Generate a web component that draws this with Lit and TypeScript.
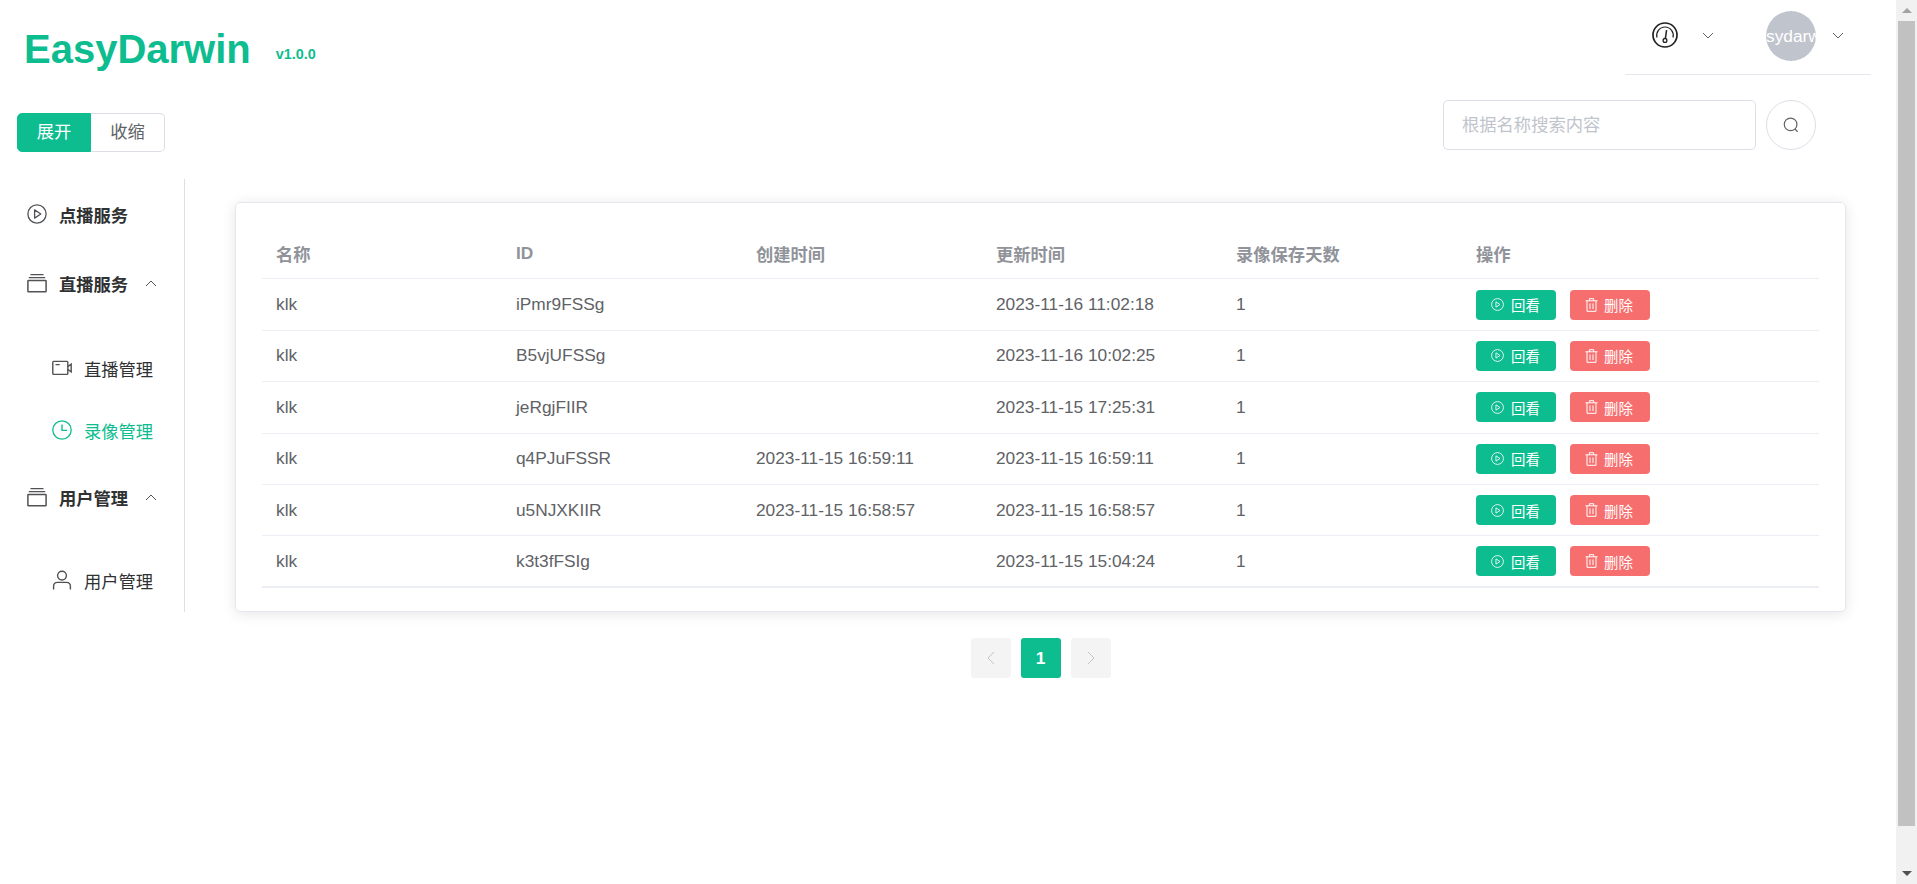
import { html, css, LitElement, svg } from "lit";
import { customElement } from "lit/decorators.js";

const playIcon = (size = 20) => html`<svg width=${size} height=${size} viewBox="0 0 20 20" fill="none" stroke="currentColor" stroke-width="1.3">
  <circle cx="10" cy="10" r="9.1"></circle>
  <path d="M7.6 5.9v8.2l6.2-4.1z" stroke-linejoin="round"></path>
</svg>`;

const stackIcon = html`<svg width="20" height="20" viewBox="0 0 20 20" fill="none" stroke="currentColor" stroke-width="1.3">
  <path d="M3.5 1.6h13M1.8 4.6h16.4" stroke-width="1.2"></path>
  <rect x="0.9" y="7.4" width="18.2" height="11.4" rx="0.6" stroke-width="1.5"></rect>
</svg>`;

const cameraIcon = html`<svg width="20" height="16" viewBox="0 0 20 16" fill="none" stroke="currentColor" stroke-width="1.4">
  <rect x="0.8" y="1.4" width="15" height="13" rx="0.8"></rect>
  <path d="M3.5 4.6h4.2M15.8 6.6l3.4-2.4v7.6l-3.4-2.4"></path>
</svg>`;

const clockIcon = html`<svg width="20" height="20" viewBox="0 0 20 20" fill="none" stroke="currentColor" stroke-width="1.3">
  <circle cx="10" cy="10" r="9.2"></circle>
  <path d="M10 4.4v6h5" stroke-width="1.4"></path>
</svg>`;

const userIcon = html`<svg width="20" height="20" viewBox="0 0 20 20" fill="none" stroke="currentColor" stroke-width="1.4">
  <circle cx="10" cy="5.6" r="4.4"></circle>
  <path d="M1.6 19.4v-3.2c0-2.4 1.8-3.8 4-3.8h8.8c2.2 0 4 1.4 4 3.8v3.2"></path>
</svg>`;

const chevron = (dir: "up" | "down") => html`<svg width="14" height="8" viewBox="0 0 14 8" fill="none" stroke="currentColor" stroke-width="1">
  ${dir === "up" ? svg`<path d="M2 7l5-5 5 5"></path>` : svg`<path d="M2 1l5 5 5-5"></path>`}
</svg>`;

const gaugeIcon = html`<svg width="26" height="26" viewBox="0 0 26 26" fill="none" stroke="#222" stroke-width="1.7">
  <circle cx="13" cy="13" r="12"></circle>
  <path d="M5 15.5a8.3 8.3 0 1 1 16 0" stroke-width="1.2"></path>
  <path d="M14.6 8.2l-1.2 8" stroke-width="1.5"></path>
  <circle cx="13" cy="18.4" r="1.9" stroke-width="1.3"></circle>
</svg>`;

const searchIcon = html`<svg width="16" height="16" viewBox="0 0 16 16" fill="none" stroke="#606266" stroke-width="1.2">
  <circle cx="7.6" cy="7.4" r="6.3"></circle>
  <path d="M12 12l2.6 2.8"></path>
</svg>`;

const trashIcon = html`<svg width="13" height="14" viewBox="0 0 13 14" fill="none" stroke="currentColor" stroke-width="1">
  <path d="M0.5 2.8h12M4.4 2.6V0.7h4.2v1.9M2 3v10.3h9V3M5 5.4v5.6M8 5.4v5.6"></path>
</svg>`;

const rows = [
  ["klk", "iPmr9FSSg", "", "2023-11-16 11:02:18", "1"],
  ["klk", "B5vjUFSSg", "", "2023-11-16 10:02:25", "1"],
  ["klk", "jeRgjFIIR", "", "2023-11-15 17:25:31", "1"],
  ["klk", "q4PJuFSSR", "2023-11-15 16:59:11", "2023-11-15 16:59:11", "1"],
  ["klk", "u5NJXKIIR", "2023-11-15 16:58:57", "2023-11-15 16:58:57", "1"],
  ["klk", "k3t3fFSIg", "", "2023-11-15 15:04:24", "1"],
];

@customElement("app-root")
export class AppRoot extends LitElement {
  static styles = css`
    :host {
      display: flex;
      height: 884px;
      overflow: hidden;
      background: #fff;
      font-family: "Liberation Sans", "Noto Sans CJK SC", sans-serif;
      font-size: 17.3px;
      color: #606266;
    }

    .page {
      flex: 1;
      min-width: 0;
    }

    /* header */
    .header {
      display: flex;
      justify-content: space-between;
      height: 75px;
    }
    .brand {
      display: flex;
      padding: 29px 0 0 24px;
      color: #0dbc8f;
      font-weight: 700;
    }
    .logo {
      font-size: 40px;
      line-height: 40px;
    }
    .version {
      margin: 18px 0 0 25px;
      font-size: 14.4px;
      line-height: 14.4px;
    }
    .user-bar {
      display: flex;
      align-items: center;
      box-sizing: border-box;
      width: 246px;
      height: 75px;
      margin-right: 25px;
      padding: 0 0 3px 27px;
      border-bottom: 1px solid #e4e7ed;
      color: #606266;
    }
    .user-bar .down-1 {
      margin-left: 23px;
      display: flex;
    }
    .user-bar .down-2 {
      margin-left: 15px;
      display: flex;
    }
    .gauge {
      display: flex;
      margin-top: -2px;
    }
    .avatar {
      flex: none;
      width: 50px;
      height: 50px;
      margin-left: 51px;
      border-radius: 50%;
      background: #c0c4cc;
      color: #fff;
      line-height: 50px;
      text-align: center;
      white-space: nowrap;
      overflow: hidden;
    }

    /* toolbar */
    .toolbar {
      display: flex;
      justify-content: space-between;
      align-items: flex-start;
      padding: 25px 80px 0 17px;
    }
    .toggle {
      display: flex;
      margin-top: 13px;
    }
    .toggle span {
      box-sizing: border-box;
      width: 74px;
      height: 39px;
      line-height: 37px;
      text-align: center;
      border: 1px solid #dcdfe6;
    }
    .toggle .on {
      background: #0dbc8f;
      border-color: #0dbc8f;
      color: #fff;
      border-radius: 5px 0 0 5px;
    }
    .toggle .off {
      border-left: 0;
      border-radius: 0 5px 5px 0;
    }
    .search {
      display: flex;
      gap: 10px;
    }
    .search input {
      box-sizing: border-box;
      width: 313px;
      height: 50px;
      padding: 0 18px;
      border: 1px solid #dcdfe6;
      border-radius: 5px;
      outline: none;
      font: inherit;
      color: #606266;
    }
    .search input::placeholder {
      color: #c0c4cc;
    }
    .search-btn {
      display: flex;
      align-items: center;
      justify-content: center;
      box-sizing: border-box;
      width: 50px;
      height: 50px;
      border: 1px solid #dcdfe6;
      border-radius: 50%;
    }

    /* body */
    .content {
      display: flex;
      margin-top: 27px;
    }
    .sidebar {
      flex: none;
      box-sizing: border-box;
      width: 185px;
      height: 433px;
      padding-top: 10px;
      border-right: 1px solid #dcdfe6;
      color: #303133;
    }
    .menu-title {
      display: flex;
      align-items: center;
      height: 50px;
      padding-left: 27px;
      font-weight: 700;
    }
    .menu-title svg:first-child {
      color: #505255;
      margin-right: 12px;
      flex: none;
    }
    .menu-title .arrow {
      display: flex;
      margin-left: 16px;
      color: #808285;
    }
    .menu-title.vod {
      margin-bottom: 19px;
    }
    .submenu {
      margin: 29px 0 11px;
    }
    .submenu.last {
      margin: 27px 0 0;
    }
    .menu-item {
      display: flex;
      align-items: center;
      height: 62px;
      padding-left: 52px;
    }
    .menu-item .icon {
      display: flex;
      justify-content: center;
      width: 20px;
      margin-right: 12px;
      color: #505255;
    }
    .menu-item.active,
    .menu-item.active .icon {
      color: #0dbc8f;
    }

    .main {
      flex: 1;
      min-width: 0;
      padding: 23px 50px 0;
    }
    .card {
      box-sizing: border-box;
      height: 410px;
      padding: 25px 26px 0;
      border: 1px solid #e4e7ed;
      border-radius: 5px;
      box-shadow: 0 2px 14px rgba(0, 0, 0, 0.1);
    }
    table {
      width: 100%;
      table-layout: fixed;
      border-collapse: separate;
      border-spacing: 0;
    }
    th,
    td {
      box-sizing: border-box;
      height: 51.4px;
      padding: 0 14px;
      border-bottom: 1px solid #ebeef5;
      text-align: left;
      font-weight: 400;
      white-space: nowrap;
    }
    th {
      font-weight: 700;
      color: #909399;
    }
    th.c {
      width: 240px;
    }
    tbody tr:last-child td {
      border-bottom-width: 2px;
    }
    .actions {
      display: flex;
      gap: 14px;
    }
    .btn {
      display: flex;
      align-items: center;
      gap: 7px;
      box-sizing: border-box;
      height: 30px;
      padding-left: 15px;
      border-radius: 4px;
      color: #fff;
      font-size: 14.4px;
    }
    .btn.play {
      width: 80px;
      background: #0dbc8f;
    }
    .btn.del {
      width: 80px;
      background: #f76e6e;
      gap: 6px;
    }

    .pager {
      display: flex;
      justify-content: center;
      gap: 10px;
      margin-top: 26px;
    }
    .pager span {
      display: flex;
      align-items: center;
      justify-content: center;
      width: 40px;
      height: 40px;
      border-radius: 3px;
      background: #f4f4f5;
      color: #c0c4cc;
    }
    .pager .current {
      background: #0dbc8f;
      color: #fff;
      font-weight: 700;
    }

    /* window scrollbar */
    .scrollbar {
      flex: none;
      display: flex;
      flex-direction: column;
      box-sizing: border-box;
      width: 21px;
      background: #f1f1f1;
    }
    .scrollbar .step {
      display: flex;
      align-items: center;
      justify-content: center;
      height: 21px;
    }
    .scrollbar .thumb {
      height: 805px;
      margin: 0 2px;
      background: #c1c1c1;
    }
    .scrollbar .spacer {
      flex: 1;
    }
  `;

  render() {
    return html`
      <div class="page">
        <div class="header">
          <div class="brand">
            <div class="logo">EasyDarwin</div>
            <div class="version">v1.0.0</div>
          </div>
          <div class="user-bar">
            <span class="gauge">${gaugeIcon}</span>
            <span class="down-1">${chevron("down")}</span>
            <div class="avatar">sydarwin</div>
            <span class="down-2">${chevron("down")}</span>
          </div>
        </div>

        <div class="toolbar">
          <div class="toggle">
            <span class="on">展开</span>
            <span class="off">收缩</span>
          </div>
          <div class="search">
            <input placeholder="根据名称搜索内容" />
            <div class="search-btn">${searchIcon}</div>
          </div>
        </div>

        <div class="content">
          <nav class="sidebar">
            <div class="menu-title vod">${playIcon()}点播服务</div>
            <div class="menu-title">
              ${stackIcon}直播服务
              <span class="arrow">${chevron("up")}</span>
            </div>
            <div class="submenu">
              <div class="menu-item"><span class="icon">${cameraIcon}</span>直播管理</div>
              <div class="menu-item active"><span class="icon">${clockIcon}</span>录像管理</div>
            </div>
            <div class="menu-title">
              ${stackIcon}用户管理
              <span class="arrow">${chevron("up")}</span>
            </div>
            <div class="submenu last">
              <div class="menu-item"><span class="icon">${userIcon}</span>用户管理</div>
            </div>
          </nav>

          <div class="main">
            <div class="card">
              <table>
                <thead>
                  <tr>
                    <th class="c">名称</th>
                    <th class="c">ID</th>
                    <th class="c">创建时间</th>
                    <th class="c">更新时间</th>
                    <th class="c">录像保存天数</th>
                    <th>操作</th>
                  </tr>
                </thead>
                <tbody>
                  ${rows.map(
                    (r) => html`<tr>
                      ${r.map((v) => html`<td>${v}</td>`)}
                      <td>
                        <div class="actions">
                          <div class="btn play">${playIcon(13)}回看</div>
                          <div class="btn del">${trashIcon}删除</div>
                        </div>
                      </td>
                    </tr>`
                  )}
                </tbody>
              </table>
            </div>
            <div class="pager">
              <span><svg width="10" height="14" viewBox="0 0 10 14" fill="none" stroke="currentColor"><path d="M8 1L2 7l6 6"></path></svg></span>
              <span class="current">1</span>
              <span><svg width="10" height="14" viewBox="0 0 10 14" fill="none" stroke="currentColor"><path d="M2 1l6 6-6 6"></path></svg></span>
            </div>
          </div>
        </div>
      </div>

      <div class="scrollbar">
        <div class="step"><svg width="10" height="5" viewBox="0 0 10 5"><path d="M5 0l5 5H0z" fill="#a3a3a3"></path></svg></div>
        <div class="thumb"></div>
        <div class="spacer"></div>
        <div class="step"><svg width="10" height="5" viewBox="0 0 10 5"><path d="M0 0h10L5 5z" fill="#505050"></path></svg></div>
      </div>
    `;
  }
}
